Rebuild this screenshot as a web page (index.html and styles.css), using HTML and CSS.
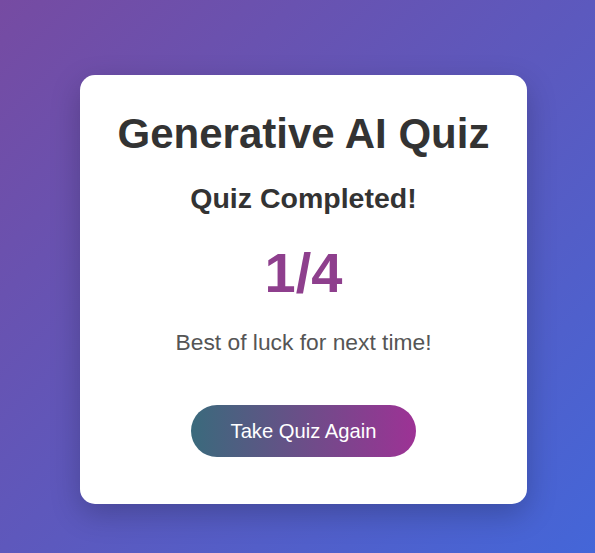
FILE: index.html
```html
<!DOCTYPE html>
<html>
<head>
<meta charset="utf-8">
<link rel="stylesheet" href="styles.css">
</head>
<body>
<div class="page">
  <div class="card">
    <h1 class="title">Generative AI Quiz</h1>
    <h2 class="subtitle">Quiz Completed!</h2>
    <div class="score">1/4</div>
    <p class="message">Best of luck for next time!</p>
    <button class="again">Take Quiz Again</button>
  </div>
</div>
</body>
</html>
```

FILE: styles.css
```css
html, body {
  margin: 0;
  padding: 0;
  height: 100%;
}
body {
  background: linear-gradient(135deg, #764ba2 0%, #4466d8 100%);
  font-family: "Liberation Sans", Arial, sans-serif;
  overflow: hidden;
}
.page {
  display: flex;
  align-items: flex-start;
  padding: 75px 0 0 80px;
}
.card {
  width: 447px;
  box-sizing: border-box;
  background: #fff;
  border-radius: 15px;
  box-shadow: 0 10px 30px rgba(0, 0, 0, 0.22);
  display: flex;
  flex-direction: column;
  align-items: center;
  padding: 34.25px 20px 47.5px;
  text-align: center;
}
.title {
  margin: 0;
  font-size: 42px;
  line-height: 1.2;
  font-weight: bold;
  color: #333;
}
.subtitle {
  margin: 21.5px 0 0;
  font-size: 28.5px;
  line-height: 1.2;
  font-weight: bold;
  color: #333;
}
.score {
  margin-top: 23.7px;
  font-size: 56px;
  line-height: 1.2;
  font-weight: bold;
  color: #8e3f8d;
}
.message {
  margin: 22.4px 0 0;
  font-size: 22.8px;
  line-height: 1.2;
  color: #555;
}
.again {
  margin-top: 49px;
  font-family: "Liberation Sans", Arial, sans-serif;
  font-size: 20.2px;
  line-height: 24px;
  padding: 14px 39.5px;
  border: none;
  border-radius: 26px;
  color: #fff;
  background: linear-gradient(90deg, #3a6a7c 0%, #9d3295 100%);
  cursor: pointer;
}
```
